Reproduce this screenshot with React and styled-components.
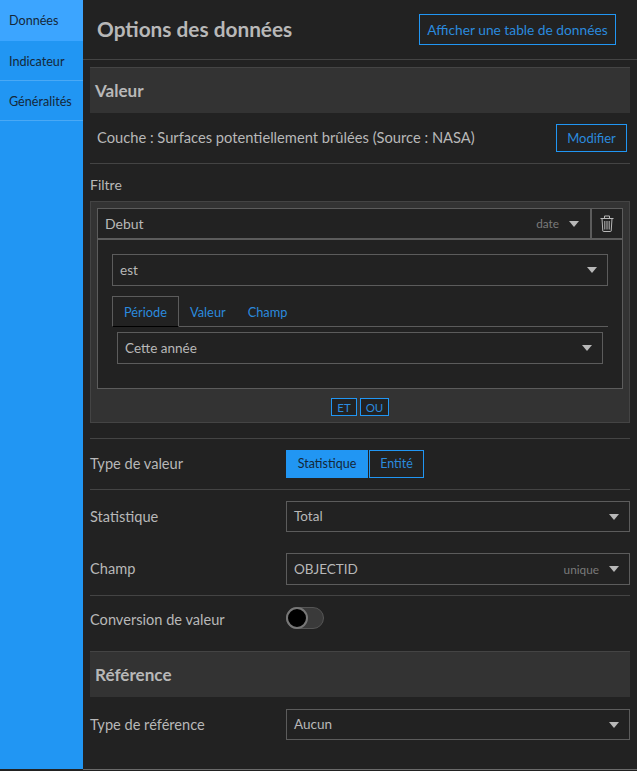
import React from "react";
import styled, { createGlobalStyle } from "styled-components";

const GlobalStyle = createGlobalStyle`
  html, body { margin: 0; padding: 0; background: #222; }
  body { font-family: "Lato", "Liberation Sans", sans-serif; }
`;

const Page = styled.div`
  display: flex;
  width: 637px;
  height: 771px;
  overflow: hidden;
  background: #222;
  color: #b8b8b8;
  font-size: 14px;
`;

const Sidebar = styled.nav`
  width: 83px;
  height: 769px;
  flex: none;
  background: #2196f3;
`;

const NavItem = styled.div`
  box-sizing: border-box;
  height: ${(p) => (p.$active ? 41 : 40)}px;
  padding: 0 0 0 9px;
  border-bottom: 1px solid ${(p) => (p.$active ? "#3ca5ff" : "#4aa9f5")};
  background: ${(p) => (p.$active ? "#3ca5ff" : "transparent")};
  color: #14283a;
  font-size: 12.6px;
  line-height: 41px;
`;

const Main = styled.main`
  flex: 1;
  min-width: 0;
  height: 769px;
  border-bottom: 1px solid #6a6a6a;
`;

const Header = styled.header`
  display: flex;
  align-items: center;
  justify-content: space-between;
  height: 59px;
  padding: 0 21px 0 14px;
  border-bottom: 1px solid #444;
`;

const Title = styled.h1`
  margin: 0 0 3px;
  color: #b8b8b8;
  font-size: 20.8px;
  font-weight: 700;
`;

const OutlineButton = styled.button`
  height: ${(p) => p.$height}px;
  padding: 0;
  width: ${(p) => p.$width}px;
  border: 1px solid #2196f3;
  background: transparent;
  color: #2b8ade;
  font-family: inherit;
  font-size: ${(p) => p.$size}px;
`;

const Content = styled.div`
  padding: 7px 7px 0;
`;

const SectionTitle = styled.h2`
  height: 45px;
  margin: ${(p) => p.$margin || 0};
  padding-left: 5px;
  border-top: 1px solid #444;
  background: #333;
  color: #b8b8b8;
  font-size: 17.1px;
  font-weight: 700;
  line-height: 46px;
`;

const LayerRow = styled.div`
  display: flex;
  align-items: center;
  justify-content: space-between;
  height: 50px;
  padding: 0 3px 0 7px;
  border-bottom: 1px solid #444;
`;

const LayerName = styled.span`
  margin-bottom: 2px;
  font-size: 14.7px;
`;

const FilterLabel = styled.div`
  height: 37px;
  line-height: 41px;
`;

const FilterBox = styled.section`
  height: 222px;
  padding: 6px;
  box-sizing: border-box;
  border: 1px solid #444;
  background: #333;
`;

const Clause = styled.div`
  height: 181px;
  box-sizing: border-box;
  border: 1px solid #5c5c5c;
  background: #222;
`;

const ClauseHead = styled.div`
  display: flex;
  height: 29px;
  border-bottom: 2px solid #5c5c5c;
`;

const ClauseName = styled.div`
  flex: 1;
  display: flex;
  align-items: center;
  padding: 0 11px 0 7px;
  border-right: 2px solid #5c5c5c;
`;

const TrashCell = styled.div`
  display: flex;
  align-items: center;
  justify-content: center;
  width: 30px;
  color: #b8b8b8;
`;

const ClauseBody = styled.div`
  padding: 14px 14px 0;
`;

const Field = styled.div`
  display: flex;
  align-items: center;
  box-sizing: border-box;
  height: ${(p) => p.$height || 31}px;
  margin: ${(p) => p.$margin || 0};
  padding: 0 10px 0 7px;
  border: 1px solid #5c5c5c;
  color: #b8b8b8;
  font-size: 13.5px;
`;

const FieldValue = styled.span`
  flex: 1;
  padding-bottom: 1px;
`;

const Hint = styled.span`
  margin-right: 10px;
  color: #7a7a7a;
  font-size: 11.8px;
`;

const Caret = styled.span`
  width: 0;
  height: 0;
  border-left: 5.5px solid transparent;
  border-right: 5.5px solid transparent;
  border-top: 6px solid #b8b8b8;
`;

const Tabs = styled.div`
  display: flex;
  height: 30px;
  margin-top: 10px;
  border-bottom: 1px solid #5c5c5c;
`;

const Tab = styled.div`
  box-sizing: border-box;
  height: 31px;
  padding: 0 ${(p) => (p.$active ? 11 : 10)}px;
  border: 1px solid ${(p) => (p.$active ? "#5c5c5c" : "transparent")};
  border-bottom: 1px solid ${(p) => (p.$active ? "#000" : "transparent")};
  color: #2b8ade;
  font-size: 12.8px;
  line-height: 30px;
`;

const LogicRow = styled.div`
  display: flex;
  justify-content: center;
  gap: 3px;
  margin-top: 9px;
`;

const LogicButton = styled.button`
  width: ${(p) => p.$width}px;
  height: 18px;
  padding: 0;
  border: 1px solid #2196f3;
  background: #222;
  color: #2b8ade;
  font-family: inherit;
  font-size: 11.5px;
`;

const Divider = styled.div`
  height: 1px;
  margin: ${(p) => p.$margin};
  background: #444;
`;

const FormRow = styled.div`
  display: grid;
  grid-template-columns: 196px 1fr;
  align-items: center;
  height: ${(p) => p.$height}px;
  margin-top: ${(p) => p.$top || 0}px;
  font-size: 14.6px;
`;

const FormLabel = styled.span`
  padding-bottom: 1px;
`;

const Segments = styled.div`
  display: flex;
  gap: 1px;
`;

const Segment = styled.div`
  box-sizing: border-box;
  width: ${(p) => p.$width}px;
  height: 28px;
  border: 1px solid #2196f3;
  background: ${(p) => (p.$active ? "#2196f3" : "transparent")};
  color: ${(p) => (p.$active ? "#14283a" : "#2b8ade")};
  font-size: 12.5px;
  line-height: 26px;
  text-align: center;
`;

const Toggle = styled.div`
  position: relative;
  width: 38px;
  height: 22px;
  margin-top: -4px;
  box-sizing: border-box;
  border: 1px solid #555;
  border-radius: 11px;
  background: #3a3a3a;
`;

const ToggleKnob = styled.span`
  position: absolute;
  top: -1px;
  left: -1px;
  width: 22px;
  height: 22px;
  box-sizing: border-box;
  border: 2px solid #777;
  border-radius: 50%;
  background: #000;
`;

function TrashIcon() {
  return (
    <svg width="14" height="17" viewBox="0 0 14 17" fill="none" stroke="currentColor" strokeWidth="1">
      <path d="M0.5 3.5h13M4.5 3.2V1h5v2.2" />
      <path d="M2 3.5l0.8 12.5a0.6 0.6 0 0 0 0.6 0.5h7.2a0.6 0.6 0 0 0 0.6-0.5L12 3.5" />
      <path d="M4.8 6v8.5M7 6v8.5M9.2 6v8.5" />
    </svg>
  );
}

function Select({ value, hint, ...rest }) {
  return (
    <Field {...rest}>
      <FieldValue>{value}</FieldValue>
      {hint && <Hint>{hint}</Hint>}
      <Caret />
    </Field>
  );
}

export default function App() {
  return (
    <Page>
      <GlobalStyle />
      <Sidebar>
        <NavItem $active>Données</NavItem>
        <NavItem>Indicateur</NavItem>
        <NavItem>Généralités</NavItem>
      </Sidebar>
      <Main>
        <Header>
          <Title>Options des données</Title>
          <OutlineButton $width={197} $height={31} $size={13.75}>Afficher une table de données</OutlineButton>
        </Header>
        <Content>
          <SectionTitle>Valeur</SectionTitle>
          <LayerRow>
            <LayerName>Couche : Surfaces potentiellement brûlées (Source : NASA)</LayerName>
            <OutlineButton $width={71} $height={28} $size={13}>Modifier</OutlineButton>
          </LayerRow>
          <FilterLabel>Filtre</FilterLabel>
          <FilterBox>
            <Clause>
              <ClauseHead>
                <ClauseName>
                  <FieldValue>Debut</FieldValue>
                  <Hint>date</Hint>
                  <Caret />
                </ClauseName>
                <TrashCell>
                  <TrashIcon />
                </TrashCell>
              </ClauseHead>
              <ClauseBody>
                <Select value="est" $height={32} />
                <Tabs>
                  <Tab $active>Période</Tab>
                  <Tab>Valeur</Tab>
                  <Tab>Champ</Tab>
                </Tabs>
                <Select value="Cette année" $margin="5px 5px 0" $height={32} />
              </ClauseBody>
            </Clause>
            <LogicRow>
              <LogicButton $width={26}>ET</LogicButton>
              <LogicButton $width={29}>OU</LogicButton>
            </LogicRow>
          </FilterBox>
          <Divider $margin="15px 0 0" />
          <FormRow $height={50}>
            <FormLabel>Type de valeur</FormLabel>
            <Segments>
              <Segment $active $width={82}>Statistique</Segment>
              <Segment $width={55}>Entité</Segment>
            </Segments>
          </FormRow>
          <Divider $margin="0" />
          <FormRow $height={31} $top={11}>
            <FormLabel>Statistique</FormLabel>
            <Select value="Total" />
          </FormRow>
          <FormRow $height={32} $top={21}>
            <FormLabel>Champ</FormLabel>
            <Select value="OBJECTID" hint="unique" $height={32} />
          </FormRow>
          <Divider $margin="10px 0 0" />
          <FormRow $height={48}>
            <FormLabel>Conversion de valeur</FormLabel>
            <Toggle>
              <ToggleKnob />
            </Toggle>
          </FormRow>
          <SectionTitle $margin="7px 0 0">Référence</SectionTitle>
          <FormRow $height={31} $top={12}>
            <FormLabel>Type de référence</FormLabel>
            <Select value="Aucun" />
          </FormRow>
        </Content>
      </Main>
    </Page>
  );
}
